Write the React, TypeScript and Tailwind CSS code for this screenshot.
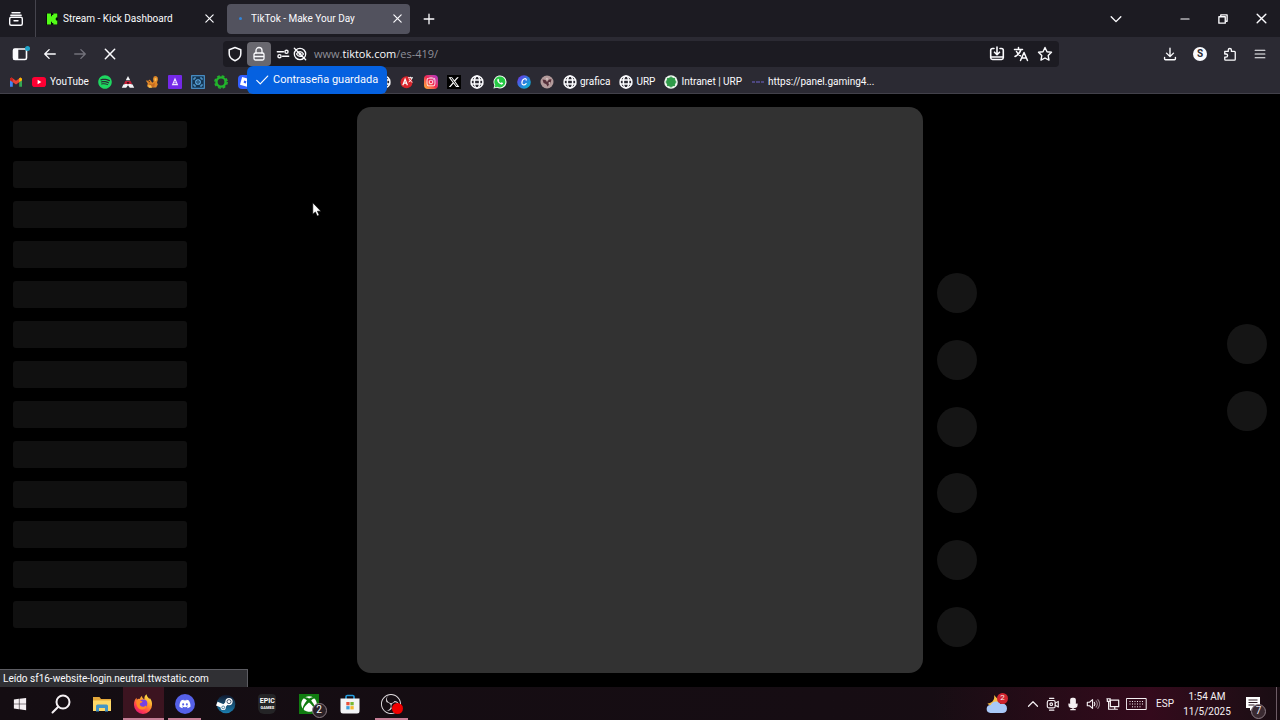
import { useState, type ReactNode } from "react";
import { FaSpotify, FaWindows, FaDiscord, FaXbox } from "react-icons/fa";
import { FaXTwitter, FaInstagram } from "react-icons/fa6";
import { SiObsstudio, SiRoblox } from "react-icons/si";

type IconProps = { children: ReactNode; className?: string; box?: string; width?: number };

function Line({ children, className = "size-4", box = "0 0 16 16", width = 1.4 }: IconProps) {
  return (
    <svg viewBox={box} className={className} fill="none" stroke="currentColor" strokeWidth={width} strokeLinecap="round" strokeLinejoin="round" aria-hidden="true">
      {children}
    </svg>
  );
}

function IconButton({ label, children, className = "w-6" }: { label: string; children: ReactNode; className?: string }) {
  return (
    <button type="button" aria-label={label} className={`flex h-6 shrink-0 items-center justify-center ${className}`}>
      {children}
    </button>
  );
}

const CloseX = ({ className = "size-3" }: { className?: string }) => (
  <Line className={className} box="0 0 12 12" width={1.3}>
    <path d="M2 2l8 8M10 2l-8 8" />
  </Line>
);

const Globe = () => (
  <Line className="size-3.5" width={1.7}>
    <circle cx="8" cy="8" r="6.8" />
    <ellipse cx="8" cy="8" rx="3" ry="6.8" />
    <path d="M1.5 5.8h13M1.5 10.2h13" />
  </Line>
);

const KickLogo = () => (
  <svg viewBox="0 0 12 12" className="size-3 shrink-0" aria-hidden="true">
    <rect width="12" height="12" fill="#06120a" />
    <path d="M1 .5h4v2.700h1V2h1.300V.5h4v4H10v1.200H9v.6h1v1.200h1.300v4h-4V10H6V8.800H5v2.700H1z" fill="#53fc18" />
  </svg>
);

const Gmail = () => (
  <svg viewBox="0 0 14 14" className="size-3.5" aria-hidden="true">
    <path d="M1 3.5v8.2h2.8V6z" fill="#4285f4" />
    <path d="M13 3.5v8.2h-2.8V6z" fill="#34a853" />
    <path d="M1 3.7L2.6 2.4 7 5.8l4.4-3.4L13 3.7v1.5L7 9.4 1 5.2z" fill="#ea4335" />
    <path d="M10.2 3.3l1.2-.9L13 3.7v1.5L10.2 7z" fill="#fbbc04" />
    <path d="M1 3.7l1.6-1.3 1.2.9V7L1 5.2z" fill="#c5221f" />
  </svg>
);

const YouTube = () => (
  <svg viewBox="0 0 14 14" className="size-3.5" aria-hidden="true">
    <rect x="0" y="2" width="14" height="10" rx="2.8" fill="#ff0033" />
    <path d="M5.6 4.8v4.4L9.4 7z" fill="#fff" />
  </svg>
);

const Triangle = () => (
  <svg viewBox="0 0 14 14" className="size-3.5" aria-hidden="true">
    <path d="M7 1l2.2 4.2H4.8z" fill="#f4f4f6" />
    <path d="M4.3 6h5.4l1.3 3H3z" fill="#c3223a" />
    <path d="M2.4 9.6L.8 12.7h4.4L7 10.2l1.8 2.5h4.4l-1.6-3.1-2.2-.7H4.6z" fill="#f4f4f6" />
    <path d="M5.6 7h2.8L7 9.8z" fill="#4a0b16" />
  </svg>
);

const Squirrel = () => (
  <svg viewBox="0 0 14 14" className="size-3.5" aria-hidden="true">
    <path d="M.8 5.6l2.6.2 1.4-1.2 1.6 1.8 1 1.4 1.2-1.4-.6-2.4.8-2.4 2.2-.6 1.6 1.2.4 2.4-1 2.8.8 2.2-1.6 2.8H4.2L2 11.2l.8-2.6z" fill="#df8627" />
    <path d="M4.2 8.3l3 1.2 2.7-1.7-.6 4H4.8z" fill="#c46a20" />
    <path d="M9.4 3.4l2-.6.2 2.4-1.8 1.2zM3 10.2h3l1 2.5H3.8z" fill="#f8c255" />
    <circle cx="4.2" cy="6.6" r=".6" fill="#3c1609" />
  </svg>
);

const PurpleTile = () => (
  <svg viewBox="0 0 14 14" className="size-3.5" aria-hidden="true">
    <rect width="14" height="14" rx="1" fill="#7428e8" />
    <path d="M7 4L4.6 9.6h4.8zM7 7v1.4" fill="none" stroke="#f1e8ff" strokeWidth="1.1" />
  </svg>
);

const BlueTile = () => (
  <svg viewBox="0 0 14 14" className="size-3.5" aria-hidden="true">
    <rect x=".7" y=".7" width="12.6" height="12.6" fill="#153552" stroke="#4d9bd6" strokeWidth="1.1" />
    <path d="M3 5V3h2M9 3h2v2M11 9v2H9M5 11H3V9" fill="none" stroke="#61b0e8" strokeWidth="1" />
    <circle cx="7" cy="7" r="2.3" fill="none" stroke="#61b0e8" strokeWidth="1.1" />
    <circle cx="7" cy="7" r=".7" fill="#61b0e8" />
  </svg>
);

const GreenRing = () => (
  <svg viewBox="0 0 14 14" className="size-3.5" aria-hidden="true">
    <circle cx="7" cy="7" r="4.6" fill="none" stroke="#22b52c" strokeWidth="2.4" />
    <circle cx="7" cy="7" r="6.1" fill="none" stroke="#22b52c" strokeWidth="1.6" strokeDasharray="2.8 1.99" />
  </svg>
);

const Roblox = () => (
  <span className="flex size-3.5 items-center justify-center rounded-sm bg-[#335fff] text-white">
    <SiRoblox className="size-2.5" />
  </span>
);

const Translator = () => (
  <svg viewBox="0 0 14 14" className="size-3.5" aria-hidden="true">
    <circle cx="6.5" cy="7.3" r="6" fill="#d9252c" />
    <path d="M2.8 10.2l2.3-6 2.3 6M3.6 8.2h3" fill="none" stroke="#fff" strokeWidth="1.2" />
    <path d="M8 2.8h5M10.5 1.8v1M8.6 7c1.7-.7 2.8-2 3.2-4M9.2 4.2c.6 1.5 1.7 2.4 3.2 3" fill="none" stroke="#fff" strokeWidth="1" />
  </svg>
);

const Instagram = () => (
  <span className="flex size-3.5 items-center justify-center rounded-sm bg-linear-to-tr from-[#ffb52e] via-[#f0264f] to-[#b02ad0] text-white">
    <FaInstagram className="size-2.5" />
  </span>
);

const XLogo = () => (
  <span className="flex size-3.5 items-center justify-center bg-black text-white">
    <FaXTwitter className="size-3" />
  </span>
);

const WhatsApp = () => (
  <svg viewBox="0 0 14 14" className="size-3.5" aria-hidden="true">
    <path d="M.4 13.6l1-3.4A6.5 6.5 0 1 1 4 12.7z" fill="#f3fff5" />
    <path d="M1.5 12.5l.8-2.5a5.5 5.5 0 1 1 2 1.8z" fill="#25c943" />
    <path d="M4.5 4.3c.5-.8 1.2-.6 1.4.1l.3.9-.5.7c.5.9 1.2 1.6 2.2 2l.7-.7 1.4.7c.2 1-1 1.6-1.7 1.5C6 9 4.3 7 4.2 5.3z" fill="#fff" />
  </svg>
);

const Canva = () => (
  <svg viewBox="0 0 14 14" className="size-3.5" aria-hidden="true">
    <defs>
      <linearGradient id="canva" x1="0" y1="0" x2="1" y2="1">
        <stop offset="0" stopColor="#7d2ae8" />
        <stop offset=".5" stopColor="#2d7be0" />
        <stop offset="1" stopColor="#00c4cc" />
      </linearGradient>
    </defs>
    <circle cx="7" cy="7" r="6.8" fill="url(#canva)" />
    <path d="M9.2 5.2c.3-1.2-.6-1.8-1.6-1.5-1.7.5-2.8 2.5-2.7 4.3.1 2.3 2.7 2.6 4.2.6" fill="none" stroke="#fff" strokeWidth="1.2" strokeLinecap="round" />
  </svg>
);

const Portrait = () => (
  <svg viewBox="0 0 14 14" className="size-3.5" aria-hidden="true">
    <circle cx="7" cy="7" r="6.5" fill="#b39a9b" />
    <path d="M2.5 4.5l3 .6L7 7l2-2.4 2.5-.4-1 3.8-3 3.6-1.2-2.4L3.6 8z" fill="#55303a" />
    <path d="M6 3l2 .5-1 2zM8.5 7.5l2-.5L9 10z" fill="#e5d3d0" />
  </svg>
);

const Urp = () => (
  <svg viewBox="0 0 14 14" className="size-3.5" aria-hidden="true">
    <circle cx="7" cy="7" r="6.8" fill="#eef7ef" />
    <circle cx="7" cy="7" r="4.8" fill="#2f9a49" />
    <path d="M7 1.600v10.800M1.600 7h10.800M3.200 3.200l7.600 7.600M10.800 3.200l-7.600 7.600" stroke="#2f9a49" strokeWidth="1.1" />
  </svg>
);

const Dashes = () => (
  <svg viewBox="0 0 14 14" className="size-3.5" aria-hidden="true">
    <path d="M1 7h3M5 7h4M10 7h3" stroke="#59529a" strokeWidth="1.3" />
  </svg>
);

const compactBookmarks: { name: string; icon: ReactNode }[] = [
  { name: "Spotify", icon: <FaSpotify className="size-3.5 text-[#1ed760]" /> },
  { name: "Triangle", icon: <Triangle /> },
  { name: "Squirrel", icon: <Squirrel /> },
  { name: "Alerts", icon: <PurpleTile /> },
  { name: "Overlay", icon: <BlueTile /> },
  { name: "Ring", icon: <GreenRing /> },
  { name: "Roblox", icon: <Roblox /> },
  { name: "Site 1", icon: <Globe /> },
  { name: "Site 2", icon: <Globe /> },
  { name: "Site 3", icon: <Globe /> },
  { name: "Site 4", icon: <Globe /> },
  { name: "Site 5", icon: <Globe /> },
  { name: "Site 6", icon: <Globe /> },
  { name: "Translator", icon: <Translator /> },
  { name: "Instagram", icon: <Instagram /> },
  { name: "X", icon: <XLogo /> },
  { name: "Site 7", icon: <Globe /> },
  { name: "WhatsApp", icon: <WhatsApp /> },
  { name: "Canva", icon: <Canva /> },
  { name: "Portrait", icon: <Portrait /> },
];

const namedBookmarks: { name: string; icon: ReactNode }[] = [
  { name: "grafica", icon: <Globe /> },
  { name: "URP", icon: <Globe /> },
  { name: "Intranet | URP", icon: <Urp /> },
  { name: "https://panel.gaming4...", icon: <Dashes /> },
];

function TabStrip() {
  return (
    <div className="flex h-[37px] items-center bg-[#1c1b22] pr-[7px]">
      <IconButton label="Firefox View" className="ml-1 w-6">
        <Line>
          <path d="M4 1.8h8M2.8 4.2h10.4" />
          <rect x="1.7" y="6.3" width="12.6" height="8" rx="1.5" />
          <path d="M6 9.8h4" />
        </Line>
      </IconButton>
      <span className="ml-[7px] h-full w-px bg-[#45444d]" />
      <div className="flex h-[30px] w-[191px] items-center pl-[10px] pr-2">
        <KickLogo />
        <button type="button" className="ml-[5px] flex-1 truncate text-left">Stream - Kick Dashboard</button>
        <IconButton label="Cerrar pestaña Stream" className="w-5"><CloseX className="size-[11px]" /></IconButton>
      </div>
      <div className="flex h-[30px] w-[183px] items-center rounded-sm bg-[#52525e] pl-3 pr-[3px]">
        <span className="size-[3px] rounded-full bg-[#3285da]" />
        <button type="button" className="ml-[9px] flex-1 truncate text-left">TikTok - Make Your Day</button>
        <IconButton label="Cerrar pestaña TikTok" className="w-5"><CloseX className="size-[11px]" /></IconButton>
      </div>
      <IconButton label="Nueva pestaña" className="ml-[7px] w-6">
        <Line className="size-3.5" width={1.5}><path d="M8 2.5v11M2.5 8h11" /></Line>
      </IconButton>
      <span className="flex-1" />
      <IconButton label="Listar pestañas" className="mr-[45px] w-6">
        <Line className="size-3.5" width={1.6}><path d="M2.5 5.5L8 11l5.5-5.5" /></Line>
      </IconButton>
      <IconButton label="Minimizar" className="mr-3.5 w-6">
        <Line className="size-3" width={1.4}><path d="M2.5 8h11" /></Line>
      </IconButton>
      <IconButton label="Restaurar" className="mr-3.5 w-6">
        <Line className="size-3" width={1.8}>
          <path d="M5 4V2.5h8.5V11H12" />
          <rect x="2.5" y="5" width="8.5" height="8.5" />
        </Line>
      </IconButton>
      <IconButton label="Cerrar"><CloseX className="size-[13px]" /></IconButton>
    </div>
  );
}

function AddressField() {
  const [value, setValue] = useState("www.tiktok.com/es-419/");
  const [editing, setEditing] = useState(false);
  const parts = value.match(/^(www\.)?([^/]*)(.*)$/);
  return (
    <div className="relative flex-1 font-['Open_Sans','Noto_Sans',sans-serif] text-[11px]">
      <input
        type="text"
        aria-label="Buscar o ingresar dirección"
        value={value}
        onChange={(e) => setValue(e.target.value)}
        onFocus={() => setEditing(true)}
        onBlur={() => setEditing(false)}
        className={`block h-6 w-full bg-transparent outline-none ${editing ? "text-[#fbfbfe]" : "text-transparent"}`}
      />
      {!editing && (
        <span aria-hidden="true" className="pointer-events-none absolute inset-0 flex items-center text-[#8f8f98]">
          {parts?.[1]}
          <span className="text-[#fbfbfe]">{parts?.[2]}</span>
          {parts?.[3]}
        </span>
      )}
    </div>
  );
}

function NavBar() {
  return (
    <div className="flex h-[34px] items-center bg-[#2b2a33] pr-2">
      <div className="flex gap-1.5 pl-2">
        <IconButton label="Barra lateral">
          <span className="relative">
            <Line width={1.6}>
              <rect x="1.5" y="3" width="13" height="10.5" rx="1.5" />
              <path d="M2 3.5h3.5V13H2z" fill="currentColor" />
            </Line>
            <span className="absolute -right-0.5 top-0 size-[5px] rounded-full bg-[#1fa3c9]" />
          </span>
        </IconButton>
        <IconButton label="Atrás"><Line className="size-3.5" width={1.6}><path d="M14 8H2M7 3L2 8l5 5" /></Line></IconButton>
        <IconButton label="Adelante"><Line className="size-3.5 text-[#73727b]" width={1.6}><path d="M2 8h12M9 3l5 5-5 5" /></Line></IconButton>
        <IconButton label="Detener"><CloseX className="size-3.5" /></IconButton>
      </div>
      <div className="ml-[101px] flex h-[26px] flex-1 items-center rounded-sm bg-[#1c1b22] pr-0.5">
        <IconButton label="Protección"><Line width={1.5}><path d="M8 1.5l5.8 2.2v4c0 3-2.3 5.6-5.8 7-3.5-1.4-5.8-4-5.8-7v-4z" /></Line></IconButton>
        <IconButton label="Información del sitio" className="w-6 rounded-sm bg-[#69686f]">
          <Line width={1.3}>
            <rect x="3" y="7" width="10" height="7" rx="1.5" />
            <path d="M5 7V4.5a3 3 0 0 1 6 0V7M3.5 10.5h9" />
          </Line>
        </IconButton>
        <IconButton label="Permisos" className="ml-1 w-4">
          <Line className="size-3.5" width={1.6}>
            <path d="M1.5 5.5h7M7.5 10.5h7" />
            <circle cx="12" cy="5.5" r="1.8" />
            <circle cx="4" cy="10.5" r="1.8" />
          </Line>
        </IconButton>
        <IconButton label="Reproducción bloqueada" className="w-[18px]">
          <Line className="size-3.5" width={1.5}>
            <circle cx="8" cy="8" r="6.5" />
            <path d="M4 8c2-3.5 6-3.5 8 0-2 3.5-6 3.5-8 0zM1.5 1.5l13 13" />
            <circle cx="8" cy="8" r="1" />
          </Line>
        </IconButton>
        <span className="w-[5px]" />
        <AddressField />
        <IconButton label="Instalar">
          <Line width={1.6}>
            <path d="M5 2.5H3.5a1.800 1.800 0 0 0-1.800 1.800v7.500a1.800 1.800 0 0 0 1.800 1.700h9a1.800 1.800 0 0 0 1.800-1.700V4.3a1.800 1.800 0 0 0-1.800-1.800H11M8 1v7.500M5.500 6.200L8 8.700l2.500-2.500M2 11h12" />
          </Line>
        </IconButton>
        <IconButton label="Traducir">
          <Line width={1.5}>
            <path d="M1.5 3.5h8M5.5 1.5v2M8 3.5C7.2 6.5 5 9 2 10.5M3.5 5.5c1 2 2.3 3.3 4 4.3M7.5 14.5l3.500-8 3.500 8M8.700 12h4.600" />
          </Line>
        </IconButton>
        <IconButton label="Agregar a marcadores"><Line width={1.4}><path d="M8 1.5l2 4.200 4.500.6-3.300 3.200.8 4.600L8 12l-4 2.100.8-4.600L1.500 6.300 6 5.700z" /></Line></IconButton>
      </div>
      <div className="ml-[99px] flex gap-1.5">
        <IconButton label="Descargas"><Line className="size-3.5" width={1.6}><path d="M8 1.5v9M4 7l4 4 4-4M1.800 12v1.500a1 1 0 0 0 1 1h10.400a1 1 0 0 0 1-1V12" /></Line></IconButton>
        <IconButton label="Cuenta"><span className="flex size-3.5 items-center justify-center rounded-full bg-[#fbfbfe] text-[10px] font-bold leading-none text-[#2b2a33]">S</span></IconButton>
        <IconButton label="Extensiones">
          <Line className="size-3.5" width={1.5}><path d="M2 5h4V3.500a1.800 1.800 0 0 1 3.600 0V5H13a1 1 0 0 1 1 1v8a1 1 0 0 1-1 1H3a1 1 0 0 1-1-1v-2.500h1.500a1.700 1.700 0 0 0 0-3.500H2z" /></Line>
        </IconButton>
        <IconButton label="Menú"><Line className="size-3" width={1.5}><path d="M1.5 3h13M1.5 8h13M1.5 13h13" /></Line></IconButton>
      </div>
    </div>
  );
}

function BookmarksBar() {
  return (
    <nav aria-label="Marcadores" className="flex h-[23px] items-center overflow-hidden border-b border-[#42414a] bg-[#2b2a33] pl-[9px] leading-[18px]">
      <a href="#gmail" aria-label="Gmail" className="shrink-0"><Gmail /></a>
      <a href="#youtube" className="ml-[9px] flex w-[66px] shrink-0 items-center gap-1"><YouTube />YouTube</a>
      <div className="flex w-[456px] shrink-0 justify-between">
        {compactBookmarks.map((b) => (
          <a key={b.name} href="#marcador" aria-label={b.name}>{b.icon}</a>
        ))}
      </div>
      <div className="ml-[9px] flex gap-[9px] whitespace-nowrap">
        {namedBookmarks.map((b) => (
          <a key={b.name} href="#marcador" className="flex items-center gap-[3px]">{b.icon}{b.name}</a>
        ))}
      </div>
    </nav>
  );
}

function FeedSkeleton() {
  return (
    <main aria-busy="true" className="relative flex flex-1 bg-black px-[13px] py-[13px]">
      <div className="flex w-[174px] shrink-0 flex-col gap-[13px] pt-[14px]">
        {Array.from({ length: 13 }, (_, i) => (
          <span key={i} className="h-[27px] rounded-[3px] bg-[#101010]" />
        ))}
      </div>
      <div className="flex flex-1 justify-center">
        <div className="aspect-square h-full max-h-[566px] rounded-[14px] bg-[#323232]" />
        <div className="mb-[27px] ml-[14px] mr-20 flex h-[374px] flex-col justify-between self-end">
          {Array.from({ length: 6 }, (_, i) => (
            <span key={i} className="size-10 rounded-full bg-[#151515]" />
          ))}
        </div>
      </div>
      <div className="flex w-10 shrink-0 flex-col justify-center gap-[27px] pb-[26px]">
        <span className="size-10 rounded-full bg-[#151515]" />
        <span className="size-10 rounded-full bg-[#151515]" />
      </div>
      <div role="status" className="absolute bottom-0 left-0 flex h-[18px] w-[248px] items-center border-r border-t border-[#5c5c62] bg-[#303034] pl-[3px]">
        Leído sf16-website-login.neutral.ttwstatic.com
      </div>
    </main>
  );
}

const Explorer = () => (
  <svg viewBox="0 0 20 20" className="size-5" aria-hidden="true">
    <path d="M1 3h6.5L9 5h10v12H1z" fill="#e5a93b" />
    <path d="M1 6.5h18V17H1z" fill="#ffd968" />
    <path d="M4 17.5V12a1.500 1.500 0 0 1 1.500-1.500h9A1.500 1.500 0 0 1 16 12v5.500h-3V14H7v3.500z" fill="#4596c5" />
  </svg>
);

const Firefox = () => (
  <svg viewBox="0 0 20 20" className="size-5" aria-hidden="true">
    <defs>
      <linearGradient id="fox" x1=".85" y1="0" x2=".2" y2="1">
        <stop offset="0" stopColor="#fff44f" />
        <stop offset=".4" stopColor="#ff9a2a" />
        <stop offset=".75" stopColor="#ff3b50" />
        <stop offset="1" stopColor="#e0147c" />
      </linearGradient>
    </defs>
    <path d="M1 11C.8 7.500 2.200 5.200 3.500 3.800l.3 2C5 4.700 6 4.800 7 5c.2-1.500 1-2.500 2-3 0 1.800 1 2.700 2.400 3.400C11.200 3 12 1.400 13.500.3c.3 2.300 1.800 3.300 3 4.900.2-.5.200-1 .1-1.500C18.500 6 19.300 8.500 19 11a9 9 0 0 1-18 0z" fill="url(#fox)" />
    <circle cx="10.3" cy="9.6" r="4" fill="#7542e5" />
    <path d="M3.500 6.800c2-1.200 4 .2 6 .6 0 1.500-2.600 1-2.800 2.800.4 2.800 4.300 3.200 6 1.200 1.400 2.200-1.200 4.400-4.200 4.200-3.600-.2-5.800-4.600-5-8.800z" fill="#ff8a24" />
  </svg>
);

const Steam = () => (
  <svg viewBox="0 0 20 20" className="size-5" aria-hidden="true">
    <defs>
      <linearGradient id="steam" x1="0" y1="0" x2="0" y2="1">
        <stop offset="0" stopColor="#10182e" />
        <stop offset="1" stopColor="#1b7fb0" />
      </linearGradient>
    </defs>
    <circle cx="10" cy="10" r="9.3" fill="url(#steam)" />
    <path d="M.8 9.600l6.700 2.800" stroke="#fff" strokeWidth="4" />
    <path d="M7.200 13.200l4.500-5" stroke="#fff" strokeWidth="3.5" />
    <circle cx="13" cy="7.6" r="3.6" fill="#fff" />
    <circle cx="13" cy="7.6" r="2" fill="none" stroke="#1b3450" strokeWidth=".8" />
    <circle cx="7.2" cy="13.4" r="2.6" fill="#fff" />
    <circle cx="7.2" cy="13.4" r="1.4" fill="none" stroke="#1b5b82" strokeWidth=".7" />
  </svg>
);

const Epic = () => (
  <span className="flex h-5 w-[18px] flex-col items-center rounded-b-md rounded-t-sm bg-[#242426] pt-1 font-bold text-white">
    <span className="text-[7px] leading-[7px]">EPIC</span>
    <span className="text-[4px] leading-[5px]">GAMES</span>
  </span>
);

const Xbox = () => (
  <span className="relative flex size-5 items-center justify-center bg-[#107c10] text-white">
    <FaXbox className="size-4" />
    <span className="absolute -bottom-1 -right-2 flex size-[15px] items-center justify-center rounded-full border border-[#8a7b83] bg-[#2a2127] text-[10px] leading-none">2</span>
  </span>
);

const Store = () => (
  <svg viewBox="0 0 20 20" className="size-5" aria-hidden="true">
    <path d="M6 5V2.800A1.300 1.300 0 0 1 7.300 1.500h5.400A1.300 1.300 0 0 1 14 2.800V5" fill="none" stroke="#269fe0" strokeWidth="1.6" />
    <path d="M.5 4.500h19V17a2.500 2.500 0 0 1-2.500 2.500H3A2.500 2.500 0 0 1 .5 17z" fill="#f3f4f6" />
    <path d="M6.300 8h3.300v3.300H6.300z" fill="#e8503a" />
    <path d="M10.400 8h3.300v3.300h-3.300z" fill="#78b833" />
    <path d="M6.300 12.100h3.300v3.300H6.300z" fill="#3c9fdd" />
    <path d="M10.400 12.100h3.300v3.300h-3.300z" fill="#f5b82e" />
  </svg>
);

const tasks: { name: string; icon: ReactNode; state?: "active" | "open" }[] = [
  { name: "Buscar", icon: <Line className="size-5" box="0 0 20 20" width={2}><circle cx="12" cy="8" r="6.5" /><path d="M7.3 12.7l-5.8 5.8" /></Line> },
  { name: "Explorador de archivos", icon: <Explorer /> },
  { name: "Firefox", icon: <Firefox />, state: "active" },
  { name: "Discord", icon: <span className="flex size-5 items-center justify-center rounded-full bg-[#5561e8] text-white"><FaDiscord className="size-3" /></span>, state: "open" },
  { name: "Steam", icon: <Steam /> },
  { name: "Epic Games", icon: <Epic /> },
  { name: "Xbox", icon: <Xbox /> },
  { name: "Microsoft Store", icon: <Store /> },
  {
    name: "OBS Studio",
    state: "open",
    icon: (
      <span className="relative text-[#e6e2e5]">
        <SiObsstudio className="size-5" />
        <span className="absolute -right-0.5 bottom-0 size-[11px] rounded-full bg-[#f00000]" />
      </span>
    ),
  },
];

function Taskbar() {
  return (
    <footer className="flex h-[33px] shrink-0 items-stretch bg-linear-to-r from-[#140d12] via-[#160d13] via-65% to-[#190d13] text-[#f5f0f3]">
      <button type="button" aria-label="Inicio" className="flex w-10 items-center justify-center">
        <FaWindows className="size-3.5" />
      </button>
      <div className="grid w-[372px] grid-cols-9">
        {tasks.map((t) => (
          <button key={t.name} type="button" aria-label={t.name} className={`relative flex items-center justify-center ${t.state === "active" ? "bg-[#3c1420]" : ""}`}>
            {t.icon}
            {t.state && <span className={`absolute bottom-0 h-0.5 bg-[#c47e95] ${t.state === "active" ? "inset-x-0" : "inset-x-1"}`} />}
          </button>
        ))}
      </div>
      <div className="flex flex-1 items-center justify-end bg-linear-to-r from-transparent from-60% via-[#340a1c] via-85% to-[#190d13]">
        <button type="button" aria-label="Clima" className="relative mr-[15px]">
          <svg viewBox="0 0 22 22" className="size-[22px]" aria-hidden="true">
            <path d="M8 2c1 4-1 8-6.500 8.500C4 14 12 13 13 7.500z" fill="#f6bd45" />
            <path d="M4.500 20a4 4 0 0 1 .3-8C6 8.300 12 7 14.500 11c4-1 6.500 1 6.500 4.500 0 3-2 4.500-4.500 4.500z" fill="#a9c9f8" />
          </svg>
          <span className="absolute right-0 top-0 flex size-[11px] items-center justify-center rounded-full bg-[#d0242f] text-[8px] leading-none">2</span>
        </button>
        <IconButton label="Iconos ocultos" className="w-5"><Line className="size-3" width={1.6}><path d="M2 11l6-6 6 6" /></Line></IconButton>
        <IconButton label="Reunirse ahora" className="w-5">
          <Line className="size-3.5" width={1.3}><rect x="1.5" y="4" width="9" height="8.5" rx="2" /><path d="M10.5 7L14 5v6.5l-3.5-2M4 1.5h5M4 15h5" /><circle cx="6" cy="8.2" r="1.5" /></Line>
        </IconButton>
        <IconButton label="Micrófono" className="w-5">
          <Line className="size-3.5" width={1.5}><rect x="5.5" y="1.5" width="5" height="8.5" rx="1.5" fill="currentColor" /><path d="M3.5 8v1c0 4 9 4 9 0V8M8 12v2.500M5.500 14.500h5" fill="currentColor" /></Line>
        </IconButton>
        <IconButton label="Volumen" className="w-5">
          <Line className="size-3.5" width={1.3}><path d="M1.5 6H4l3.500-3v10L4 10H1.500zM9.500 6.200c.8 1 .8 2.600 0 3.600" /><path d="M11.5 4.500c1.700 2 1.700 5 0 7M13.500 3c2.500 3 2.500 7 0 10" opacity=".5" /></Line>
        </IconButton>
        <IconButton label="Red" className="w-5">
          <Line className="size-3.5" width={1.4}><path d="M5 3.500h9.500V11H5zM10 11v3M7 14h6M1 2h4M1.500 2v3h3V2M3 5v9h3" /></Line>
        </IconButton>
        <IconButton label="Teclado" className="w-[26px]">
          <Line className="h-3.5 w-[21px]" box="0 0 21 14" width={1}><path d="M.8 1.500h19.400v11H.8z" /><path d="M3.500 4.500h14M3.500 7h14M6 9.800h9" strokeDasharray="1 1.5" strokeLinecap="butt" /></Line>
        </IconButton>
        <button type="button" className="ml-1.5 w-5 text-center">ESP</button>
        <button type="button" className="ml-1.5 w-[52px] whitespace-nowrap text-center leading-[15px]">
          <span className="block">1:54 AM</span>
          <span className="block">11/5/2025</span>
        </button>
        <button type="button" aria-label="Notificaciones" className="relative ml-[13px] mr-4">
          <svg viewBox="0 0 14 14" className="size-3.5" aria-hidden="true">
            <path d="M0 0h14v11H7l-3 3v-3H0z" fill="#fff" />
            <path d="M2.5 3h9M2.5 5.500h9M2.5 8h6" stroke="#2a1720" />
          </svg>
          <span className="absolute -bottom-2 -right-1.5 flex size-[15px] items-center justify-center rounded-full border border-[#8a7b83] bg-[#3a2a31] text-[10px] leading-none">7</span>
        </button>
        <span className="mr-[3px] h-full w-px bg-[#6d5c65]" />
      </div>
    </footer>
  );
}

export default function App() {
  return (
    <div className="relative flex min-h-screen flex-col overflow-hidden bg-black font-['Roboto','Noto_Sans',sans-serif] text-[10px] leading-[18px] text-[#fbfbfe]">
      <header>
        <TabStrip />
        <NavBar />
        <BookmarksBar />
      </header>
      <FeedSkeleton />
      <Taskbar />
      <div role="status" className="absolute left-[247px] top-[66px] flex h-7 w-[140px] items-center gap-1 whitespace-nowrap rounded-md bg-[#0561e0] pl-2 text-[11px]">
        <Line className="size-3.5" width={1.4}><path d="M2 8.5l4 4 8.500-9" /></Line>
        Contraseña guardada
      </div>
      <svg viewBox="0 0 10 15" className="pointer-events-none absolute left-[312px] top-[202px] h-[15px] w-2.5" aria-hidden="true">
        <path d="M.8.8v11.400l2.600-2.300 1.800 4.200 2-.9-1.800-4h3.500z" fill="#fff" stroke="#000" strokeWidth=".6" />
      </svg>
    </div>
  );
}
